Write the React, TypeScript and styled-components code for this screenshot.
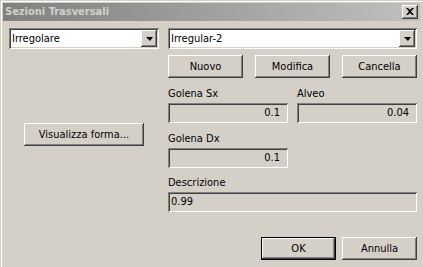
import styled, { createGlobalStyle } from "styled-components";

const GlobalStyle = createGlobalStyle`
  html, body {
    margin: 0;
    padding: 0;
    background: #d4d0c8;
  }
  body {
    font-family: Tahoma, "DejaVu Sans Condensed", "Liberation Sans", sans-serif;
    font-size: 11px;
    color: #000;
  }
`;

const raised = `
  box-shadow: inset -1px -1px 0 #404040, inset 1px 1px 0 #ffffff,
    inset -2px -2px 0 #808080, inset 2px 2px 0 #d4d0c8;
`;

const sunken = `
  box-shadow: inset 1px 1px 0 #808080, inset -1px -1px 0 #ffffff,
    inset 2px 2px 0 #404040, inset -2px -2px 0 #d4d0c8;
`;

const Window = styled.div`
  width: 423px;
  height: 267px;
  box-sizing: border-box;
  padding: 3px 3px 0 3px;
  background: #d4d0c8;
  box-shadow: inset 1px 1px 0 #d4d0c8, inset 2px 2px 0 #ffffff;
  display: flex;
  flex-direction: column;
  overflow: hidden;
`;

const TitleBar = styled.div`
  height: 18px;
  padding: 0 2px 0 2px;
  background: linear-gradient(to right, #808080, #c0c0c0);
  display: flex;
  align-items: center;
  justify-content: space-between;
`;

const Title = styled.span`
  color: #d4d0c8;
  font-weight: bold;
  font-size: 11px;
  line-height: 18px;
`;

const CloseButton = styled.div`
  width: 16px;
  height: 14px;
  background: #d4d0c8;
  ${raised}
  display: flex;
  align-items: center;
  justify-content: center;
  padding-bottom: 1px;
  box-sizing: border-box;
`;

const Body = styled.div`
  display: flex;
  gap: 9px;
  padding: 7px 3px 0 6px;
`;

const LeftColumn = styled.div`
  width: 150px;
  display: flex;
  flex-direction: column;
  align-items: center;
`;

const RightColumn = styled.div`
  width: 249px;
  display: flex;
  flex-direction: column;
`;

const ComboBox = styled.div`
  width: 100%;
  height: 21px;
  box-sizing: border-box;
  padding: 2px;
  background: #ffffff;
  ${sunken}
  display: flex;
  align-items: center;
`;

const ComboText = styled.span`
  flex: 1;
  padding-left: 1px;
  line-height: 17px;
  white-space: nowrap;
  overflow: hidden;
`;

const DropButton = styled.div`
  width: 16px;
  height: 17px;
  box-sizing: border-box;
  background: #d4d0c8;
  ${raised}
  display: flex;
  align-items: center;
  justify-content: center;
`;

const Arrow = styled.div`
  width: 0;
  height: 0;
  border-left: 4px solid transparent;
  border-right: 3px solid transparent;
  border-top: 4px solid #000;
  margin-left: 1px;
`;

const Button = styled.button<{ $w: number; $default?: boolean }>`
  width: ${(p) => p.$w}px;
  height: 23px;
  box-sizing: border-box;
  border: none;
  padding: 0;
  margin: 0;
  background: #d4d0c8;
  font: inherit;
  color: #000;
  ${(p) =>
    p.$default
      ? `box-shadow: inset 0 0 0 1px #000000, inset -2px -2px 0 #404040,
          inset 2px 2px 0 #ffffff, inset -3px -3px 0 #808080;`
      : raised}
`;

const ButtonRow = styled.div`
  display: grid;
  grid-template-columns: repeat(3, 75px);
  column-gap: 12px;
  margin-top: 6px;
`;

const FieldGrid = styled.div`
  display: grid;
  grid-template-columns: 120px 120px;
  column-gap: 9px;
  row-gap: 9px;
  margin-top: 9px;
`;

const FieldGroup = styled.div<{ $span?: boolean; $top?: number }>`
  display: flex;
  flex-direction: column;
  grid-column: ${(p) => (p.$span ? "1 / span 2" : "auto")};
  margin-top: ${(p) => p.$top ?? 0}px;
`;

const Label = styled.label`
  line-height: 13px;
  margin-bottom: 3px;
`;

const Field = styled.div<{ $align?: "left" | "right" }>`
  height: 20px;
  box-sizing: border-box;
  padding: 0 ${(p) => (p.$align === "left" ? "4px 0 3px" : "8px 0 4px")};
  background: #d4d0c8;
  ${sunken}
  line-height: 20px;
  text-align: ${(p) => p.$align ?? "right"};
`;

const Footer = styled.div`
  display: flex;
  justify-content: flex-end;
  gap: 6px;
  margin-top: 25px;
`;

const ShowShapeButton = styled(Button)`
  margin-top: 74px;
`;

const App = () => {
  return (
    <Window>
      <GlobalStyle />
      <TitleBar>
        <Title>Sezioni Trasversali</Title>
        <CloseButton>
          <svg width="8" height="7" viewBox="0 0 8 7">
            <path
              d="M0 0h2l2 2 2-2h2L5 3.5 8 7H6L4 5 2 7H0l3-3.5z"
              fill="#000"
            />
          </svg>
        </CloseButton>
      </TitleBar>
      <Body>
        <LeftColumn>
          <ComboBox>
            <ComboText>Irregolare</ComboText>
            <DropButton>
              <Arrow />
            </DropButton>
          </ComboBox>
          <ShowShapeButton $w={120}>Visualizza forma...</ShowShapeButton>
        </LeftColumn>
        <RightColumn>
          <ComboBox>
            <ComboText>Irregular-2</ComboText>
            <DropButton>
              <Arrow />
            </DropButton>
          </ComboBox>
          <ButtonRow>
            <Button $w={75}>Nuovo</Button>
            <Button $w={75}>Modifica</Button>
            <Button $w={75}>Cancella</Button>
          </ButtonRow>
          <FieldGrid>
            <FieldGroup>
              <Label>Golena Sx</Label>
              <Field>0.1</Field>
            </FieldGroup>
            <FieldGroup>
              <Label>Alveo</Label>
              <Field>0.04</Field>
            </FieldGroup>
            <FieldGroup>
              <Label>Golena Dx</Label>
              <Field>0.1</Field>
            </FieldGroup>
            <FieldGroup />
            <FieldGroup $span $top={-1}>
              <Label>Descrizione</Label>
              <Field $align="left">0.99</Field>
            </FieldGroup>
          </FieldGrid>
          <Footer>
            <Button $w={75} $default>
              OK
            </Button>
            <Button $w={75}>Annulla</Button>
          </Footer>
        </RightColumn>
      </Body>
    </Window>
  );
};

export default App;
